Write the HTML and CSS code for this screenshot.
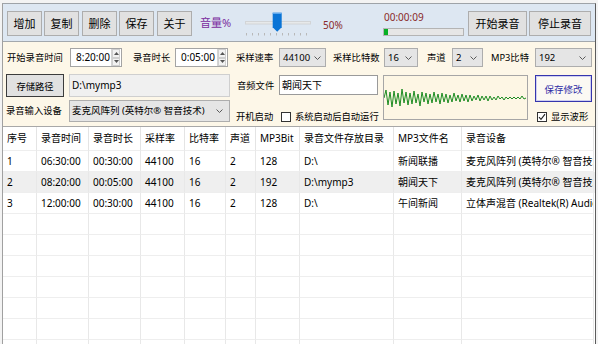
FILE: index.html
```html
<!DOCTYPE html>
<html lang="zh">
<head>
<meta charset="utf-8">
<title>录音</title>
<link rel="stylesheet" href="styles.css">
</head>
<body>
<div class="window">
  <div class="toolbar">
    <button class="tb-btn b-add">增加</button>
    <button class="tb-btn b-copy">复制</button>
    <button class="tb-btn b-del">删除</button>
    <button class="tb-btn b-save">保存</button>
    <button class="tb-btn b-about">关于</button>
    <span class="vol-label">音量%</span>
    <svg class="slider" width="75" height="25" viewBox="0 0 75 25">
      <rect x="5.5" y="10.5" width="65" height="2.5" fill="#e7e9ea" stroke="#d2d4d6" stroke-width="1"/>
      <path d="M32.7 1.7h9v14.5l-4.5 4.5l-4.5-4.5z" fill="#0a74d6"/>
      <path d="M32.7 1.7h9v1.2h-9z" fill="#6aaef0"/>
      <g stroke="#b8b8b8" stroke-width="1">
        <line x1="6.5" y1="22" x2="6.5" y2="24.5"/>
        <line x1="12.5" y1="22" x2="12.5" y2="24.5"/>
        <line x1="18.5" y1="22" x2="18.5" y2="24.5"/>
        <line x1="24.5" y1="22" x2="24.5" y2="24.5"/>
        <line x1="30.5" y1="22" x2="30.5" y2="24.5"/>
        <line x1="36.5" y1="22" x2="36.5" y2="24.5"/>
        <line x1="42.5" y1="22" x2="42.5" y2="24.5"/>
        <line x1="48.5" y1="22" x2="48.5" y2="24.5"/>
        <line x1="54.5" y1="22" x2="54.5" y2="24.5"/>
        <line x1="60.5" y1="22" x2="60.5" y2="24.5"/>
        <line x1="66.5" y1="22" x2="66.5" y2="24.5"/>
      </g>
    </svg>
    <span class="vol-value">50%</span>
    <div class="timer">
      <div class="timer-text">00:00:09</div>
      <div class="progress"><div class="progress-fill" style="width:4px"></div></div>
    </div>
    <button class="tb-btn b-start">开始录音</button>
    <button class="tb-btn b-stop">停止录音</button>
  </div>

  <div class="panel">
    <div class="row1">
      <span class="lbl l-start">开始录音时间</span>
      <div class="spin s-start">
        <span class="spin-text">8:20:00</span>
        <span class="spin-btns">
          <span class="spin-half"><svg width="5" height="3" viewBox="0 0 5 3"><path d="M0 3L2.5 0L5 3z" fill="#555"/></svg></span>
          <span class="spin-half"><svg width="5" height="3" viewBox="0 0 5 3"><path d="M0 0L2.5 3L5 0z" fill="#555"/></svg></span>
        </span>
      </div>
      <span class="lbl l-dur">录音时长</span>
      <div class="spin s-dur">
        <span class="spin-text">0:05:00</span>
        <span class="spin-btns">
          <span class="spin-half"><svg width="5" height="3" viewBox="0 0 5 3"><path d="M0 3L2.5 0L5 3z" fill="#555"/></svg></span>
          <span class="spin-half"><svg width="5" height="3" viewBox="0 0 5 3"><path d="M0 0L2.5 3L5 0z" fill="#555"/></svg></span>
        </span>
      </div>
      <span class="lbl l-rate">采样速率</span>
      <div class="select sel-rate"><span>44100</span><svg class="chev" width="7" height="4" viewBox="0 0 7 4"><path d="M0.5 0.5L3.5 3.5L6.5 0.5" stroke="#5a5a5a" fill="none"/></svg></div>
      <span class="lbl l-bits">采样比特数</span>
      <div class="select sel-bits"><span>16</span><svg class="chev" width="7" height="4" viewBox="0 0 7 4"><path d="M0.5 0.5L3.5 3.5L6.5 0.5" stroke="#5a5a5a" fill="none"/></svg></div>
      <span class="lbl l-ch">声道</span>
      <div class="select sel-ch"><span>2</span><svg class="chev" width="7" height="4" viewBox="0 0 7 4"><path d="M0.5 0.5L3.5 3.5L6.5 0.5" stroke="#5a5a5a" fill="none"/></svg></div>
      <span class="lbl l-mp3">MP3比特</span>
      <div class="select sel-mp3"><span>192</span><svg class="chev" width="7" height="4" viewBox="0 0 7 4"><path d="M0.5 0.5L3.5 3.5L6.5 0.5" stroke="#5a5a5a" fill="none"/></svg></div>
    </div>

    <div class="grid2">
      <button class="path-btn">存储路径</button>
      <div class="path-field">D:\mymp3</div>
      <span class="lbl g-lbl">音频文件</span>
      <div class="audio-input">朝闻天下</div>
      <div class="wave">
        <svg width="143" height="43" viewBox="0 0 143 43">
          <polyline fill="none" stroke="#1d8c22" stroke-width="1" points="0,22 2,14 4,29 6,16 8,31 10,15 12,28 14,17 16,30 18,13 20,27 22,16 24,29 26,17 28,28 30,15 32,27 34,18 36,30 38,16 40,26 42,17 44,28 46,18 48,27 50,16 52,26 54,18 56,28 58,17 60,26 62,18 64,27 66,19 68,26 70,17 72,25 74,19 76,26 78,18 80,25 82,19 84,26 86,19 88,25 90,20 92,24 94,19 96,25 98,20 100,24 102,20 104,25 106,20 108,24 110,21 112,24 114,20 116,23 118,21 120,24 122,21 124,23 126,21 128,23 130,21 132,23 134,21 136,23 138,20 140,23 142,22"/>
        </svg>
      </div>
      <button class="save-btn">保存修改</button>

      <span class="lbl g-lbl">录音输入设备</span>
      <div class="select dev-select"><span>麦克风阵列 (英特尔® 智音技术)</span><svg class="chev" width="7" height="4" viewBox="0 0 7 4"><path d="M0.5 0.5L3.5 3.5L6.5 0.5" stroke="#5a5a5a" fill="none"/></svg></div>
      <span class="lbl g-lbl low">开机启动</span>
      <label class="check low">
        <span class="box"></span>
        <span class="lbl">系统启动后自动运行</span>
      </label>
      <label class="check low show-wave">
        <span class="box"><svg width="8" height="8" viewBox="0 0 8 8"><path d="M1 4.2L3 6.4L7 1.2" stroke="#222" stroke-width="1.1" fill="none"/></svg></span>
        <span class="lbl">显示波形</span>
      </label>
    </div>
  </div>

  <div class="table-wrap">
    <div class="trow head">
      <div class="c">序号</div><div class="c">录音时间</div><div class="c">录音时长</div><div class="c">采样率</div><div class="c">比特率</div><div class="c">声道</div><div class="c">MP3Bit</div><div class="c">录音文件存放目录</div><div class="c">MP3文件名</div><div class="c">录音设备</div>
    </div>
    <div class="trow">
      <div class="c">1</div><div class="c">06:30:00</div><div class="c">00:30:00</div><div class="c">44100</div><div class="c">16</div><div class="c">2</div><div class="c">128</div><div class="c">D:\</div><div class="c">新闻联播</div><div class="c">麦克风阵列 (英特尔® 智音技术)</div>
    </div>
    <div class="trow alt">
      <div class="c">2</div><div class="c">08:20:00</div><div class="c">00:05:00</div><div class="c">44100</div><div class="c">16</div><div class="c">2</div><div class="c">192</div><div class="c">D:\mymp3</div><div class="c">朝闻天下</div><div class="c">麦克风阵列 (英特尔® 智音技术)</div>
    </div>
    <div class="trow">
      <div class="c">3</div><div class="c">12:00:00</div><div class="c">00:30:00</div><div class="c">44100</div><div class="c">16</div><div class="c">2</div><div class="c">128</div><div class="c">D:\</div><div class="c">午间新闻</div><div class="c">立体声混音 (Realtek(R) Audio)</div>
    </div>
    <div class="trow"><div class="c"></div><div class="c"></div><div class="c"></div><div class="c"></div><div class="c"></div><div class="c"></div><div class="c"></div><div class="c"></div><div class="c"></div><div class="c"></div></div>
    <div class="trow"><div class="c"></div><div class="c"></div><div class="c"></div><div class="c"></div><div class="c"></div><div class="c"></div><div class="c"></div><div class="c"></div><div class="c"></div><div class="c"></div></div>
    <div class="trow"><div class="c"></div><div class="c"></div><div class="c"></div><div class="c"></div><div class="c"></div><div class="c"></div><div class="c"></div><div class="c"></div><div class="c"></div><div class="c"></div></div>
    <div class="trow"><div class="c"></div><div class="c"></div><div class="c"></div><div class="c"></div><div class="c"></div><div class="c"></div><div class="c"></div><div class="c"></div><div class="c"></div><div class="c"></div></div>
    <div class="trow"><div class="c"></div><div class="c"></div><div class="c"></div><div class="c"></div><div class="c"></div><div class="c"></div><div class="c"></div><div class="c"></div><div class="c"></div><div class="c"></div></div>
    <div class="trow"><div class="c"></div><div class="c"></div><div class="c"></div><div class="c"></div><div class="c"></div><div class="c"></div><div class="c"></div><div class="c"></div><div class="c"></div><div class="c"></div></div>
    <div class="trow"><div class="c"></div><div class="c"></div><div class="c"></div><div class="c"></div><div class="c"></div><div class="c"></div><div class="c"></div><div class="c"></div><div class="c"></div><div class="c"></div></div>
  </div>
</div>
</body>
</html>
```

FILE: styles.css
```css
* { box-sizing: border-box; }
html, body { margin: 0; padding: 0; }
body {
  width: 598px;
  height: 344px;
  overflow: hidden;
  background: #f3f3f3;
  font-family: "Noto Sans", "Noto Sans CJK SC", sans-serif;
  color: #000;
}

.window {
  margin: 3px 2px 0 2px;
  height: 341px;
  border-top: 1px solid #9ea3a8;
  border-left: 1px solid #a0a0a0;
  border-right: 1px solid #5c5c5c;
  display: flex;
  flex-direction: column;
  overflow: hidden;
}

/* ---------- toolbar ---------- */
.toolbar {
  flex: none;
  height: 38px;
  padding: 7px 0 0 4px;
  background: #dde7f2;
  border-bottom: 1px solid #a3a8ad;
  display: flex;
  align-items: flex-start;
}
.tb-btn {
  flex: none;
  height: 25px;
  padding: 0;
  margin: 0;
  background: #e1e1e1;
  border: 1px solid #adadad;
  font-family: "Noto Sans CJK SC", sans-serif;
  font-size: 11px;
  line-height: 23px;
  color: #000;
}
.b-add, .b-copy, .b-del, .b-save, .b-about { width: 35px; }
.b-add { margin-right: 2px; }
.b-copy { margin-right: 3px; }
.b-del { margin-right: 2px; }
.b-save { margin-right: 3px; }
.vol-label {
  flex: none;
  width: 40px;
  margin-left: 8px;
  font-size: 11px;
  line-height: 24px;
  color: #7b2c9e;
}
.slider { flex: none; display: block; }
.vol-value {
  flex: none;
  width: 60px;
  margin-left: 8px;
  font-size: 10px;
  line-height: 28px;
  color: #8a2a2a;
}
.timer { flex: none; width: 81px; }
.timer-text {
  font-size: 10px;
  line-height: 12px;
  color: #8a2a2a;
  padding-left: 1px;
}
.progress {
  margin-top: 5px;
  width: 81px;
  height: 8px;
  border: 1px solid #b4b4b4;
  background: #e6e6e6;
}
.progress-fill { height: 100%; background: #06b025; }
.b-start { width: 59px; margin-left: 4px; }
.b-stop { width: 62px; margin-left: 2px; }

/* ---------- settings panel ---------- */
.panel {
  flex: none;
  background: #fdf7e8;
  border-bottom: 1px solid #a8a8a8;
  padding: 6px 0 2px 3px;
}
.lbl {
  flex: none;
  font-family: "Noto Sans", "Noto Sans CJK SC", sans-serif;
  font-size: 9.3px;
  line-height: 12px;
  white-space: nowrap;
}
.row1 {
  display: flex;
  align-items: center;
  height: 19px;
}
.l-start { width: 63px; margin-left: 1px; }
.l-dur { width: 53px; padding-left: 11px; }
.l-rate { width: 51px; padding-left: 8px; }
.l-bits { width: 58px; padding-left: 7px; }
.l-ch { width: 34px; padding-left: 9px; }
.l-mp3 { width: 52px; padding-left: 8px; }

.spin {
  flex: none;
  height: 19px;
  display: flex;
  background: #fff;
  border: 1px solid #a4a4a4;
}
.s-start { width: 52px; }
.s-dur { width: 53px; }
.spin-text {
  flex: 1;
  font-size: 10px;
  line-height: 17px;
  padding-left: 5px;
}
.spin-btns {
  flex: none;
  width: 9px;
  display: flex;
  flex-direction: column;
  border-left: 1px solid #d4d4d4;
  margin-right: 1px;
}
.spin-half {
  flex: 1;
  display: flex;
  align-items: center;
  justify-content: center;
  background: #f2f2f2;
  border: 1px solid #cfcfcf;
}

.select {
  flex: none;
  height: 19px;
  display: flex;
  align-items: center;
  justify-content: space-between;
  background: #e5e5e5;
  border: 1px solid #adadad;
  padding: 0 5px 0 3px;
  font-size: 9.5px;
  line-height: 17px;
  white-space: nowrap;
  overflow: hidden;
}
.chev { flex: none; display: block; }
.sel-rate { width: 47px; padding-right: 4px; }
.sel-bits { width: 34px; }
.sel-ch { width: 31px; }
.sel-mp3 { width: 57px; }

.grid2 {
  margin-top: 7px;
  display: grid;
  grid-template-columns: 63px 167px 43px 104px 152px 57px;
  grid-template-rows: 24px 26px;
}
.g-lbl { align-self: center; }
.g-lbl:first-of-type { padding-left: 1px; }
.low { align-self: end; margin-bottom: 1px; }

.path-btn {
  width: 58px;
  height: 23px;
  padding: 0;
  background: #e1e1e1;
  border: 1px solid #3c3c3c;
  font-family: "Noto Sans CJK SC", sans-serif;
  font-size: 9.3px;
  color: #000;
}
.path-field {
  width: 161px;
  height: 23px;
  background: #f0f0f0;
  border: 1px solid #cfcfcf;
  padding-left: 2px;
  font-size: 10px;
  line-height: 21px;
}
.audio-input {
  width: 99px;
  height: 20px;
  margin-top: 1px;
  background: #fff;
  border: 1px solid #9a9a9a;
  padding-left: 2px;
  font-size: 10px;
  line-height: 18px;
}
.wave {
  grid-row: span 2;
  width: 145px;
  height: 45px;
  margin-top: 1px;
  border: 1px solid #a6a6a6;
  background: #fdf6e4;
}
.wave svg { display: block; }
.save-btn {
  width: 57px;
  height: 27px;
  margin-top: 1px;
  padding: 0;
  background: #fbf9f3;
  border: 1px solid #3535ad;
  box-shadow: inset 0 0 0 1px #cfcff0;
  font-family: "Noto Sans CJK SC", sans-serif;
  font-size: 9.5px;
  color: #2e2ea6;
}
.dev-select {
  width: 161px;
  height: 22px;
  margin-top: 2px;
  padding: 0 6px 0 2px;
  line-height: 20px;
  font-size: 9.5px;
}
.check {
  display: flex;
  align-items: center;
}
.check .box {
  flex: none;
  width: 10px;
  height: 10px;
  margin-left: 2px;
  margin-right: 4px;
  background: #fff;
  border: 1px solid #333;
  display: flex;
  align-items: center;
  justify-content: center;
}
.check .box svg { display: block; }
.show-wave { grid-column: 6; }

/* ---------- table ---------- */
.table-wrap {
  flex: 1;
  background: #fff;
  overflow: hidden;
}
.trow {
  display: grid;
  grid-template-columns: 34px 52px 52px 44px 41px 30px 44px 94px 68px 132px;
  height: 21px;
}
.trow.head { height: 24px; }
.trow.alt { background: #efefef; }
.c {
  border-right: 1px solid #e8e8e8;
  border-bottom: 1px solid #eeeeee;
  padding-left: 4px;
  font-size: 10px;
  line-height: 20px;
  white-space: nowrap;
  overflow: hidden;
}
.head .c { line-height: 23px; border-right-color: #e4e4e4; }
```
